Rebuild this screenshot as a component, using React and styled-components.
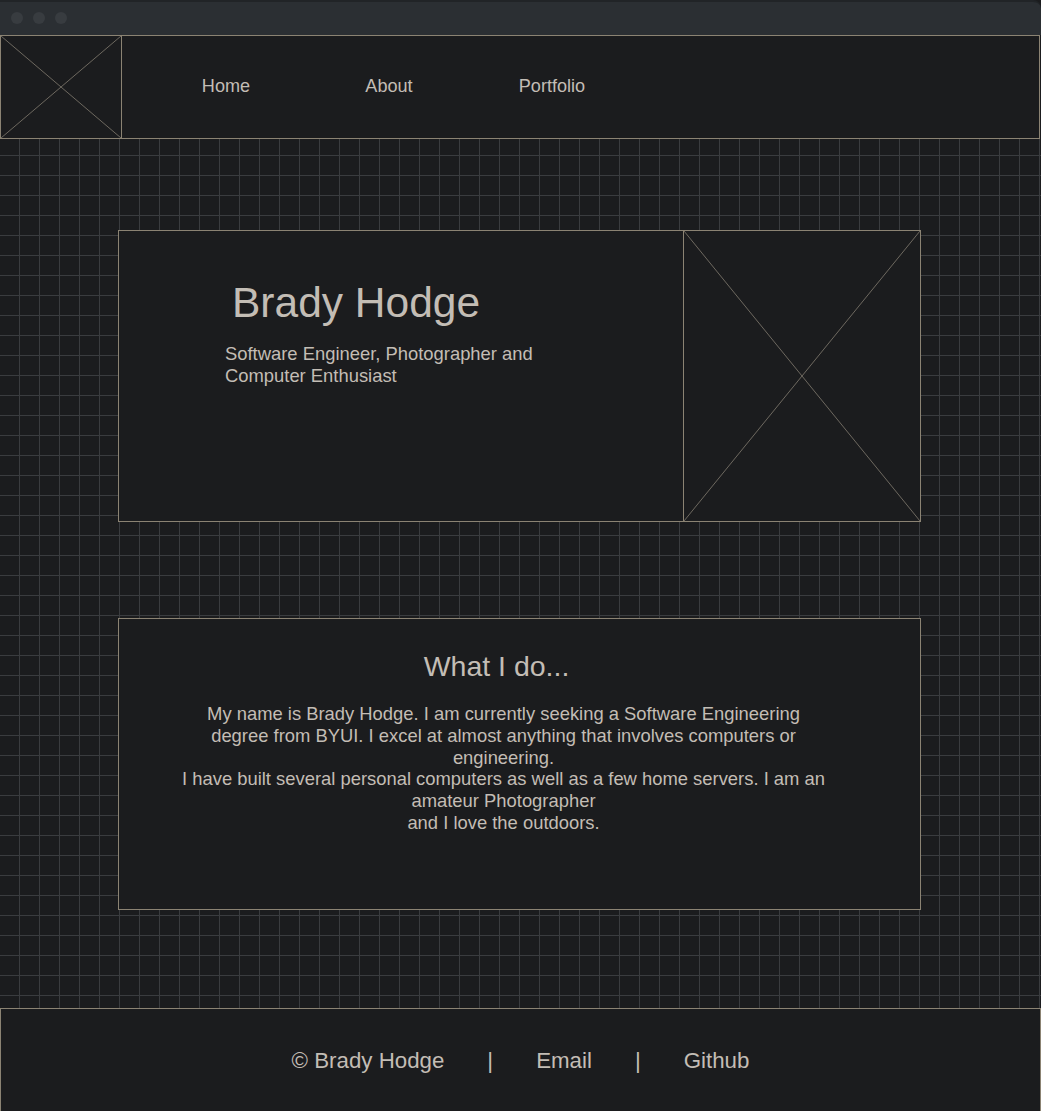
import React from "react";
import styled, { createGlobalStyle } from "styled-components";

const GlobalStyle = createGlobalStyle`
  html { overflow: hidden; }
  body {
    margin: 0;
    background: #1b1c1e;
    font-family: "Liberation Sans", Arial, sans-serif;
    color: #c3bdb5;
  }
  * { box-sizing: border-box; }
`;

const Page = styled.div`
  width: 1041px;
  display: flex;
  flex-direction: column;
`;

const Chrome = styled.div`
  height: 35px;
  background: #2b2f33;
  border-top: 2px solid #212427;
  border-top-right-radius: 8px;
  display: flex;
  align-items: center;
  gap: 10px;
  padding-left: 11px;
  padding-bottom: 1px;
`;

const Dot = styled.span`
  width: 12px;
  height: 12px;
  border-radius: 50%;
  background: #383c40;
`;

const Header = styled.header`
  width: 1040px;
  height: 104px;
  border: 1px solid #8b8373;
  display: flex;
  background: #1b1c1e;
`;

const Placeholder = styled.div`
  width: ${(p) => p.$w}px;
  flex: none;
  align-self: stretch;
  ${(p) => (p.$side === "right" ? "border-right" : "border-left")}: 1px solid #8b8373;
  svg { display: block; width: 100%; height: 100%; }
`;

const Nav = styled.nav`
  display: flex;
  align-items: center;
  padding-left: 22.5px;
  padding-bottom: 2px;
`;

const NavItem = styled.a`
  width: 163px;
  text-align: center;
  font-size: 18.1px;
  color: #c3bdb5;
  text-decoration: none;
`;

const Main = styled.main`
  height: 869px;
  padding: 91px 0 0 118px;
  display: flex;
  flex-direction: column;
  gap: 96px;
  background-color: #1b1c1e;
  background-image:
    linear-gradient(to right, #3a3c3f 0 1px, transparent 1px),
    linear-gradient(to bottom, #3a3c3f 0 1px, transparent 1px);
  background-size: 20px 20px;
  background-position: 19px 16px;
`;

const Card = styled.section`
  width: 803px;
  height: 292px;
  border: 1px solid #8b8373;
  background: #1b1c1e;
  display: flex;
`;

const Intro = styled.div`
  flex: 1;
  padding: 48px 0 0 106px;
`;

const Name = styled.h1`
  margin: 0 0 0 7px;
  font-size: 42.5px;
  font-weight: 400;
  line-height: 48px;
  color: #c3bdb5;
`;

const Tagline = styled.p`
  margin: 16px 0 0;
  width: 340px;
  font-size: 18.4px;
  line-height: 22px;
`;

const About = styled.div`
  flex: 1;
  padding: 30px 78px 0 46px;
  text-align: center;
`;

const Heading = styled.h2`
  margin: 0;
  padding-right: 14px;
  font-size: 28.5px;
  font-weight: 400;
  line-height: 34px;
`;

const Body = styled.p`
  margin: 20px auto 0;
  max-width: 649px;
  font-size: 18.4px;
  line-height: 21.8px;
`;

const Footer = styled.footer`
  height: 110px;
  border: 1px solid #8b8373;
  display: flex;
  justify-content: center;
  gap: 43px;
  padding-top: 39px;
  font-size: 22.3px;
  background: #1b1c1e;
`;

const FootLink = styled.a`
  color: #c3bdb5;
  text-decoration: none;
  line-height: 26px;
`;

const Cross = () => (
  <svg viewBox="0 0 100 100" preserveAspectRatio="none">
    <line x1="0" y1="0" x2="100" y2="100" stroke="#6e6960" strokeWidth="1" vectorEffect="non-scaling-stroke" />
    <line x1="100" y1="0" x2="0" y2="100" stroke="#6e6960" strokeWidth="1" vectorEffect="non-scaling-stroke" />
  </svg>
);

export default function App() {
  return (
    <Page>
      <GlobalStyle />
      <Chrome>
        <Dot />
        <Dot />
        <Dot />
      </Chrome>
      <Header>
        <Placeholder $w={121} $side="right">
          <Cross />
        </Placeholder>
        <Nav>
          <NavItem href="#">Home</NavItem>
          <NavItem href="#">About</NavItem>
          <NavItem href="#">Portfolio</NavItem>
        </Nav>
      </Header>
      <Main>
        <Card>
          <Intro>
            <Name>Brady Hodge</Name>
            <Tagline>Software Engineer, Photographer and Computer Enthusiast</Tagline>
          </Intro>
          <Placeholder $w={237} $side="left">
            <Cross />
          </Placeholder>
        </Card>
        <Card>
          <About>
            <Heading>What I do...</Heading>
            <Body>
              My name is Brady Hodge. I am currently seeking a Software Engineering degree from BYUI. I excel at almost anything that involves computers or engineering.
              <br />
              I have built several personal computers as well as a few home servers. I am an amateur Photographer
              <br />
              and I love the outdoors.
            </Body>
          </About>
        </Card>
      </Main>
      <Footer>
        <FootLink href="#">© Brady Hodge</FootLink>
        <span>|</span>
        <FootLink href="#">Email</FootLink>
        <span>|</span>
        <FootLink href="#">Github</FootLink>
      </Footer>
    </Page>
  );
}
